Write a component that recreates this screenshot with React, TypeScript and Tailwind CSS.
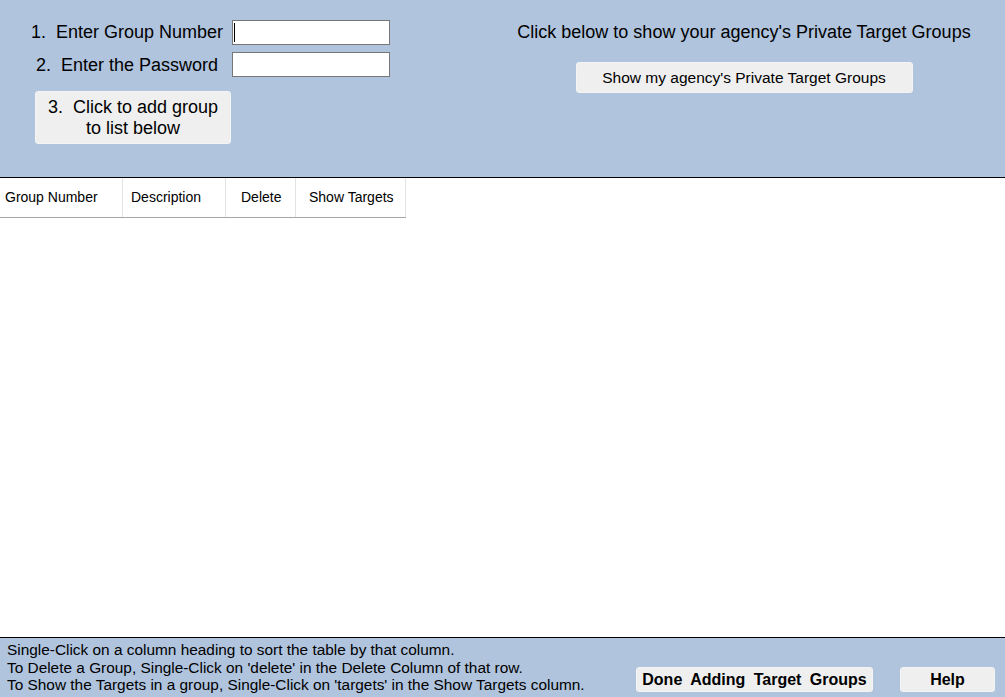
import React from "react"

const font = { fontFamily: '"Liberation Sans", Arial, sans-serif' }

function GroupForm() {
  return (
    <div className="flex w-[400px] flex-col pl-[27px] pt-[20px]">
      <div className="flex items-center">
        <span className="w-[200px] text-center text-[18px] leading-[25px]">1.&nbsp; Enter Group Number</span>
        <div className="relative ml-[5px]">
          <input
            type="text"
            className="block h-[25px] w-[158px] border border-[#767676] bg-white px-[2px] outline-none"
          />
          <span className="absolute left-[2px] top-[3px] h-[19px] w-px bg-black" />
        </div>
      </div>
      <div className="mt-[7px] flex">
        <span className="w-[200px] self-end text-center text-[18px] leading-[23px]">2.&nbsp; Enter the Password</span>
        <input
          type="password"
          className="ml-[5px] block h-[25px] w-[158px] border border-[#767676] bg-white px-[2px] outline-none"
        />
      </div>
      <button
        type="button"
        className="ml-[8px] mt-[14px] h-[53px] w-[196px] rounded-[3px] border border-[#f4f4f4] bg-[#efefef] text-[18px] leading-[21px] text-black"
      >
        3.&nbsp; Click to add group
        <br />
        to list below
      </button>
    </div>
  )
}

function PrivateGroups() {
  return (
    <div className="flex flex-1 flex-col items-center pl-[83px] pt-[20px]">
      <p className="whitespace-nowrap text-[18px] leading-[24px]">
        Click below to show your agency's Private Target Groups
      </p>
      <button
        type="button"
        className="mt-[18px] h-[31px] w-[337px] rounded-[3px] border border-[#f4f4f4] bg-[#efefef] text-[15.5px] text-black"
      >
        Show my agency's Private Target Groups
      </button>
    </div>
  )
}

const columns = [
  { label: "Group Number", className: "w-[123px] pl-[5px]" },
  { label: "Description", className: "w-[103px] pl-[8px]" },
  { label: "Delete", className: "w-[70px] pl-[15px]" },
  { label: "Show Targets", className: "w-[110px] pl-[13px]" },
]

function GroupTable() {
  return (
    <div className="flex w-[406px] border-b border-[#a6a6a6]">
      {columns.map((col) => (
        <div
          key={col.label}
          className={`flex h-[39px] cursor-pointer items-center border-r border-[#e3e3e3] text-[14px] ${col.className}`}
        >
          {col.label}
        </div>
      ))}
    </div>
  )
}

export default function App() {
  return (
    <div className="flex h-[697px] w-full flex-col overflow-hidden bg-white text-black" style={font}>
      <div className="flex h-[178px] shrink-0 border-b border-black bg-[#b0c4de]">
        <GroupForm />
        <PrivateGroups />
      </div>

      <div className="flex-1 bg-white">
        <GroupTable />
      </div>

      <div className="flex h-[60px] shrink-0 items-start border-t border-black bg-[#b0c4de]">
        <div className="flex-1 whitespace-nowrap pl-[7px] pt-[3px] text-[15.4px] leading-[17.5px]">
          <p>Single-Click on a column heading to sort the table by that column.</p>
          <p>To Delete a Group, Single-Click on 'delete' in the Delete Column of that row.</p>
          <p>To Show the Targets in a group, Single-Click on 'targets' in the Show Targets column.</p>
        </div>
        <div className="flex gap-[27px] pr-[10px] pt-[29px]">
          <button
            type="button"
            className="h-[25px] w-[237px] rounded-[3px] border border-[#f4f4f4] bg-[#efefef] text-[16px] font-bold text-black [word-spacing:4px]"
          >
            Done Adding Target Groups
          </button>
          <button
            type="button"
            className="h-[25px] w-[95px] rounded-[3px] border border-[#f4f4f4] bg-[#efefef] text-[16px] font-bold text-black"
          >
            Help
          </button>
        </div>
      </div>
    </div>
  )
}
